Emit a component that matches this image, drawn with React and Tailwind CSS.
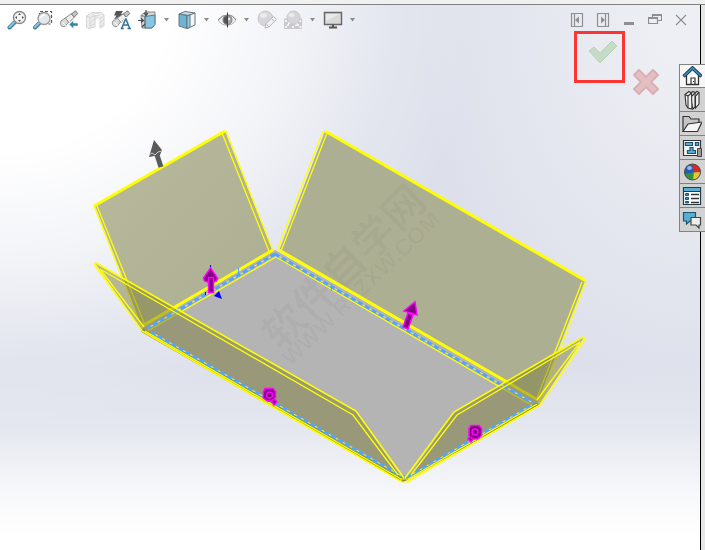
import React, { useState } from "react";

const ZoomFitIcon = () => (
  <svg width="20" height="20" viewBox="0 0 20 20" fill="none">
    <path d="M8 12 2.500 17.500" stroke="#3f7f9f" strokeWidth="4" strokeLinecap="round" />
    <path d="M8 11.500 2.500 17" stroke="#8fc3dc" strokeWidth="2" strokeLinecap="round" />
    <circle cx="12.500" cy="7.500" r="6" fill="#f1f3f4" stroke="#8a8a8a" strokeWidth="1.400" />
    <path d="m12.500 3 1.500 2h-3zM12.500 12l1.500-2h-3zM8 7.500 10 6v3zM17 7.500 15 6v3z" fill="#555" />
  </svg>
);

const ZoomAreaIcon = () => (
  <svg width="20" height="20" viewBox="0 0 20 20" fill="none">
    <path d="M6.500 6V1.500h12V14h-3" stroke="#555" strokeWidth="1.200" strokeDasharray="3 2" />
    <path d="M6 13.500 2 17.500" stroke="#3f7f9f" strokeWidth="4" strokeLinecap="round" />
    <path d="M6 13 2 17" stroke="#8fc3dc" strokeWidth="2" strokeLinecap="round" />
    <circle cx="11" cy="8.500" r="6" fill="#e3e9ec" stroke="#999" strokeWidth="1.300" />
    <path d="M8 8a3.500 3.500 0 0 1 4-3" stroke="#fff" strokeWidth="1.500" />
  </svg>
);

const Telescope = () => (
  <>
    <path d="m2 11 5-3.500 3 4-4 5c-3 1-6-2-4-5.500z" fill="#d9d9d9" stroke="#909090" />
    <path d="m6.500 8 6-4.500 3 3.500-5.500 5.500z" fill="#ececec" stroke="#8a8a8a" />
    <path d="m12.500 4 4-3.200 2.200 2.700-3.500 3.700z" fill="#c4c4c4" stroke="#777" />
    <path d="m3.500 12 3 3.500M8 8.500l3 3.500" stroke="#fff" />
  </>
);

const PreviousViewIcon = () => (
  <svg width="20" height="20" viewBox="0 0 20 20" fill="none">
    <Telescope />
    <path d="m10 14.500 4.500-4.200v2.700H19v3h-4.500v2.700z" fill="#3587ad" stroke="#f8f8f8" strokeWidth=".5" />
  </svg>
);

const SectionIcon = () => (
  <svg width="20" height="20" viewBox="0 0 20 20" fill="none" stroke="#d6d6d6">
    <path d="M1.500 6 7 2.500h9.500L19 5v11l-4 2v-8.500c-1-2-4-2-5 0V17l-6 1.500-2.500-1z" fill="#ededed" />
    <path d="M1.500 6 5 7.500 10 6l3-2.500M5 7.500v11M10 6v4M15 9l4-3.500M5 13l5-4M5 17l5-4M15 13l4-4M15 17l4-4" />
    <ellipse cx="11" cy="4.500" rx="3" ry="1.300" fill="#f9f9f9" />
  </svg>
);

const AnnotationViewIcon = () => (
  <svg width="20" height="20" viewBox="0 0 20 20" fill="none">
    <Telescope />
    <path d="M5 1h7l-2 3h2L3 9.500l2.500-4H3z" fill="#555" />
    <path d="m10.500 18.500 4-10h1.200l4 10M12 15h5.500M9.500 18.500h3M16.500 18.500H20" stroke="#f6f6f6" strokeWidth="3" />
    <path d="m10.800 18 4-9.500M14.800 8.500l3.700 9.500M12 15h5M9.800 18.500h3M16.500 18.500H20" stroke="#35779e" strokeWidth="1.500" />
  </svg>
);

const OrientationIcon = () => (
  <svg width="20" height="20" viewBox="0 0 20 20" fill="none">
    <path d="M4 5.500 8 2h10v11l-3 5H5z" fill="#d9d9d9" stroke="#888" />
    <path d="M8 6.500 18 5v9.500L15 18H8z" fill="#8bc4df" stroke="#4b7f98" />
    <path d="M4 5.500 8 6.500l3-4M8 6.500V18" stroke="#777" />
    <path d="M9 0v5M7 3l2 2.500L11 3M1 10.500h5M4 8.500l2.500 2L4 12.500M5 17l3-3" stroke="#4a4a4a" strokeWidth="1.200" />
  </svg>
);

const DisplayStyleIcon = () => (
  <svg width="20" height="20" viewBox="0 0 20 20" fill="none" stroke="#66747b">
    <path d="m2 4 6-2.500L18 3l-6 2.500z" fill="#c2e4f2" />
    <path d="m2 4 8 1.500v13L2 16z" fill="#6eb4d5" />
    <path d="m10 6 8-3v12l-8 3.500z" fill="#f4f5f6" />
    <path d="m10 6 3-1.200v12.600l-3 1.100z" fill="#92cce4" />
  </svg>
);

const EyeIcon = () => (
  <svg width="20" height="20" viewBox="0 0 20 20" fill="none">
    <path d="M1 10.500Q5 5 10.500 5T19 10.500Q15 15.500 10 15.500T1 10.500z" fill="#f2f2f2" stroke="#b4b4b4" />
    <path d="M1 10Q5 5 10.500 5T19 10" stroke="#8a8a8a" />
    <circle cx="10.500" cy="10" r="4.500" fill="#aaa" stroke="#777" />
    <path d="M10.500 6a4 4 0 0 0 0 8z" fill="#555" />
    <circle cx="12" cy="9" r="1" fill="#fff" />
    <path d="M10.500 2.500v15" stroke="#444" />
  </svg>
);

const AppearanceIcon = () => (
  <svg width="20" height="20" viewBox="0 0 20 20" fill="none">
    <circle cx="8.500" cy="8.500" r="7.500" fill="#d6d6d8" stroke="#c9c9cb" />
    <ellipse cx="6.500" cy="5.500" rx="3.500" ry="2.500" fill="#ebebed" />
    <path d="m8 18 1-4.500 7.500-7 3 3-7.500 7.500z" fill="#f1f1f3" stroke="#b9b9bb" />
    <path d="m9 13.500 3 3.500M14.500 8.500l3 3" stroke="#b9b9bb" />
  </svg>
);

const SceneIcon = () => (
  <svg width="20" height="20" viewBox="0 0 20 20" fill="none">
    <path d="M1 8.500h4v10H1zM15 8.500h4v10h-4zM1 14h18v5H1z" fill="#c9c9cb" />
    <path d="M2 10h2v2H2zM16 10h2v2h-2zM4 14h2v2H4zM9 16h2v2H9zM14 14h2v2h-2zM2 16h2v2H2zM12 14.500h2V16h-2zM16.500 16h2v2h-2z" fill="#f3f3f5" />
    <circle cx="10.500" cy="7.500" r="6.500" fill="#d6d6d8" stroke="#c9c9cb" />
    <ellipse cx="8.500" cy="5" rx="3" ry="2" fill="#ebebed" />
  </svg>
);

const MonitorIcon = () => (
  <svg width="20" height="20" viewBox="0 0 20 20" fill="none">
    <path d="M1.500 2.500h17v12h-17z" fill="#d8d8d8" stroke="#666" strokeWidth="1.400" />
    <path d="M3 4h14L3 11z" fill="#e9e9e9" />
    <path d="M10 15v2.500M6 17.500h8" stroke="#555" strokeWidth="2" />
  </svg>
);

const HomeIcon = () => (
  <svg width="20" height="20" viewBox="0 0 20 20" fill="none">
    <path d="M4.500 9v9.500h12V9" fill="#fff" stroke="#333" strokeWidth="1.300" />
    <path d="M9 18.500V12h4v6.500M11.500 15v1" stroke="#333" strokeWidth="1.200" />
    <path d="m1.500 10.500 9-8.500 9 8.500" stroke="#153f57" strokeWidth="3.500" />
    <path d="m2 10 8.500-8 8.500 8" stroke="#3f94bf" strokeWidth="1.600" />
  </svg>
);

const LibraryIcon = () => (
  <svg width="20" height="20" viewBox="0 0 20 20" fill="#f1f1f1" stroke="#333" strokeWidth="1.100">
    <path d="m11.500 4 3.500-2.500 2 1V14l-3.500 4z" />
    <path d="m7.500 4 3.500-2.500 2 1V17l-2 2z" />
    <path d="m3 4.500 4-3 2.500 1.500L10 19l-4-1-2-3z" />
    <path d="m3 4.500 3 1.500 3.500-3M6 6v12M10 6l3-3M13.500 6 17 2.500M13.500 6v12" fill="none" />
  </svg>
);

const FolderIcon = () => (
  <svg width="20" height="20" viewBox="0 0 20 20" stroke="#333" strokeWidth="1.200">
    <path d="M1 17.500v-15h6l2 2.500h8v4" fill="#c6c6c6" />
    <path d="m1 17.500 5-7.500 14-2-4.500 9.500z" fill="#f5f5f5" />
  </svg>
);

const PaletteIcon = () => (
  <svg width="20" height="20" viewBox="0 0 20 20" fill="none">
    <path d="M1.500 2.500h17v15h-17z" fill="#f5f5f5" stroke="#333" strokeWidth="1.200" />
    <path d="M3.500 4.500h7v3h-7zM13.500 4.500h3v3h-3zM8 9.500h3v3h2.500v3h-8v-3H8z" fill="#58aed2" stroke="#1b5472" strokeWidth="1.200" />
    <path d="M15.500 10.500h4v8h-4z" fill="#999" stroke="#444" />
  </svg>
);

const BallIcon = () => (
  <svg width="20" height="20" viewBox="0 0 20 20">
    <circle cx="10.500" cy="10" r="8" fill="#205fb5" />
    <path d="M9 2.100Q12 6 11.500 10.500L18.500 10A8 8 0 0 0 9 2.100z" fill="#d82b20" />
    <path d="M11.500 10.500 18.500 10A8 8 0 0 1 11 18z" fill="#eac62b" />
    <path d="M2.600 11.500Q7 12 11.500 10.500L11 18a8 8 0 0 1-8.400-6.500z" fill="#319537" />
    <ellipse cx="7.500" cy="6" rx="2.500" ry="2" fill="#c8dcfb" opacity=".7" />
    <circle cx="10.500" cy="10" r="8" fill="none" stroke="#4e4e4e" />
  </svg>
);

const PropertiesIcon = () => (
  <svg width="20" height="20" viewBox="0 0 20 20" fill="none">
    <path d="M1.500 1.500h17v17h-17z" fill="#fff" stroke="#223b49" strokeWidth="1.200" />
    <path d="M2 2h16v3H2z" fill="#58aed2" />
    <path d="M2 5.500h16" stroke="#223b49" />
    <path d="M3.500 7.500h3v2h-3zM3.500 11.500h3v2h-3zM3.500 15.500h3v1.500h-3z" fill="#3f94bf" stroke="#1b5472" />
    <path d="M9 8.500h8M9 12.500h8M9 16.500h8" stroke="#333" strokeWidth="1.300" />
  </svg>
);

const ForumIcon = () => (
  <svg width="20" height="20" viewBox="0 0 20 20">
    <path d="M1.500 2.500h12v8.500H8L4.500 14v-3h-3z" fill="#58aed2" stroke="#1b5472" strokeWidth="1.200" />
    <path d="M9 7.500h9.500v7.500H17v3l-3-3H9z" fill="#eee" stroke="#444" strokeWidth="1.200" />
  </svg>
);

const tools = [
  { name: "Zoom to Fit", icon: <ZoomFitIcon /> },
  { name: "Zoom to Area", icon: <ZoomAreaIcon /> },
  { name: "Previous View", icon: <PreviousViewIcon /> },
  { name: "Section View", icon: <SectionIcon /> },
  { name: "Dynamic Annotation Views", icon: <AnnotationViewIcon /> },
  { name: "View Orientation", icon: <OrientationIcon />, menu: true },
  { name: "Display Style", icon: <DisplayStyleIcon />, menu: true },
  { name: "Hide/Show Items", icon: <EyeIcon />, menu: true },
  { name: "Edit Appearance", icon: <AppearanceIcon /> },
  { name: "Apply Scene", icon: <SceneIcon />, menu: true },
  { name: "View Settings", icon: <MonitorIcon />, menu: true },
];

const windowButtons = [
  { name: "Previous pane", path: "M1.500 .5h11v13h-11zM4.500 .5v13", fill: "M9 3.500v7L5 7z" },
  { name: "Next pane", path: "M1.500 .5h11v13h-11zM9.500 .5v13", fill: "M5 3.500v7L9 7z" },
  { name: "Minimize", fill: "M2 9h10v3H2z" },
  { name: "Restore", path: "M4.500 4V1.500h9v6H10M.5 4.500h9v6h-9zM.5 5.500h9M4.500 2.500h9" },
  { name: "Close", path: "m2 2 10 10M12 2 2 12" },
];

const tabs = [
  { name: "Home", icon: <HomeIcon /> },
  { name: "Design Library", icon: <LibraryIcon /> },
  { name: "File Explorer", icon: <FolderIcon /> },
  { name: "View Palette", icon: <PaletteIcon /> },
  { name: "Appearances", icon: <BallIcon /> },
  { name: "Custom Properties", icon: <PropertiesIcon /> },
  { name: "Forum", icon: <ForumIcon /> },
];

// bend lines where the flanges meet the base
const bends = [
  "M275 254 148 328",
  "M275 254 533 403",
  "M151 332 398 474 404 477 411 475 532 405",
];

const Model = () => (
  <svg
    className="absolute top-0 left-0"
    width="700"
    height="545"
    viewBox="0 5 700 545"
    fill="none"
  >
    <defs>
      <linearGradient id="flange" x1="0" y1="0" x2="1" y2="1">
        <stop offset="0" stopColor="#b9ba9c" />
        <stop offset="1" stopColor="#acae92" />
      </linearGradient>
    </defs>

    {/* base and the two rear flanges */}
    <path d="M275 250 539 401 405 481 142 328z" fill="#b4b4b4" />
    <path d="M95 206 225 131 273 251 142 327z" fill="url(#flange)" />
    <path d="M325 131 585 281 538 401 279 251z" fill="#adaf93" />

    {/* watermark */}
    <g fill="#000000" fillOpacity=".03" fontWeight="700">
      <text
        transform="translate(344 267) rotate(-45)"
        y="15"
        fontSize="42"
        textAnchor="middle"
        fontFamily="'Noto Sans CJK SC', sans-serif"
      >
        软件自学网
      </text>
      <text
        transform="translate(291 367) rotate(-44)"
        fontSize="23"
        fontFamily="'Liberation Sans', sans-serif"
      >
        WWW.RJZXW.COM
      </text>
    </g>

    <g stroke="#ffff00">
      <path d="M94 206 225 131" strokeWidth="3" />
      <path d="M325 131 586 281" strokeWidth="3" />
      <path d="M142 326 273 250M279 250 538 400" strokeWidth="3" />
      <g strokeWidth="1.300">
        <path d="M94 206 141 326M97 206 145 325M222 133 269 251M226 131 273 251" />
        <path d="M323 131 277 251M327 133 281 251M586 281 540 402M582 282 537 398" />
        <path d="M146 332 276 257 533 406" />
      </g>
    </g>

    {/* front flanges are see-through */}
    <path d="M95 263 356 411 404 481 142 331z" fill="#7d7d3c" fillOpacity=".49" />
    <path d="M584 337 454 412 406 481 539 405z" fill="#7d7d3c" fillOpacity=".49" />
    <path d="M142 330 403 480 538 404" stroke="#8b8b3c" strokeWidth="4" />

    {bends.map((d) => (
      <g key={d}>
        <path d={d} stroke="#8fa9b4" strokeWidth="3" strokeDasharray="1 1" />
        <path d={d} stroke="#e8e86a" strokeWidth="1" />
        <path d={d} stroke="#50a5ff" strokeWidth="3" strokeDasharray="5 3" />
      </g>
    ))}
    <path d="M238.500 268v8M331.500 284v7" stroke="#50a5ff" />

    <g stroke="#ffff00">
      <path d="M94 264 142 331 402 482M94 264 96 263 356 411 404 478" strokeWidth="1.600" />
      <path d="M100 269 144 327M100 269 353 415 398 475M145 331 401 479" strokeWidth="1.300" />
      <path d="M407 482 540 405 585 339 583 337 454 412 405 478" strokeWidth="1.600" />
      <path d="M580 342 537 400M580 342 457 415 411 475M537 404 408 479" strokeWidth="1.300" />
      <path d="M401 479h9v3h-9z" />
    </g>

    {/* drag handles */}
    <path d="m156 152 5 15" stroke="#5a5a5a" strokeWidth="5" />
    <path d="m154 140 8 10-2 5-11 2z" fill="#5a5a5a" />
    <path d="m149 155 3-2 3 2 3-3 4-1" stroke="#c8c8c8" />

    <path d="m219 291 3 8-8-3z" fill="#0000ff" />
    <path d="M210.500 265v4M205.500 292v3" stroke="#0000ff" />
    <g fill="#800080" stroke="#ff00ff" strokeWidth="1.500">
      <path d="m210.500 268 7 10-1 3-6 2-6-2-1-3z" />
      <path d="M208.500 277.500h5v15h-5z" />

      <path d="m408 313 5 2-5 14-5-2z" />
      <path d="m415 302 2 13-13-4z" />

      <path d="m269 398 3-2 5 6-3 3z" />
      <path d="M265 388.500h8l2.500 3v6l-4 3.500h-4l-4-3v-6z" />
      <circle cx="269.500" cy="395" r="3" />

      <path d="m472 433 3 3-4 6-3-3z" />
      <path d="M471 425.500h8l2.500 3v7l-4 3.500h-5l-3.500-3v-7.500z" />
      <circle cx="475" cy="432" r="3" />
    </g>
  </svg>
);

const App = () => {
  const [activeTab, setActiveTab] = useState("Home");

  return (
    <div className="relative min-h-screen flex flex-col bg-[#e6e6e6]">
      <header className="h-[5px] bg-[#f0f0f0] border-b border-[#808080]" />

      <div className="flex flex-1 pr-1">
        <main className="relative flex-1 min-h-[545px] overflow-hidden border-r border-black bg-[linear-gradient(to_bottom,transparent_66%,rgba(255,255,255,0.25)_78%,rgba(255,255,255,0.8)_90%,white_98%),radial-gradient(ellipse_480px_420px_at_0px_0px,white_35%,rgba(255,255,255,0.65)_60%,rgba(255,255,255,0.2)_82%,transparent_100%),radial-gradient(ellipse_280px_400px_at_100%_0px,#eeeff4_15%,transparent_100%),linear-gradient(#dde0eb,#dde0eb)]">
          <Model />

          {/* Heads-up toolbar */}
          <div className="relative flex items-center justify-between h-[26px] pt-1 pl-[7px] pr-3">
            <div className="flex items-center gap-1.5">
              {tools.map((tool) => (
                <React.Fragment key={tool.name}>
                  <button aria-label={tool.name} className="w-5 h-5">
                    {tool.icon}
                  </button>
                  {tool.menu && (
                    <button aria-label={`${tool.name} menu`} className="w-2">
                      <svg width="8" height="6" viewBox="0 0 8 6">
                        <path d="M1 1h5L3.500 4.500z" fill="#8b8b8b" />
                      </svg>
                    </button>
                  )}
                </React.Fragment>
              ))}
            </div>
            <div className="flex items-center gap-3">
              {windowButtons.map((item) => (
                <button key={item.name} aria-label={item.name} className="w-3.5 h-3.5">
                  <svg width="14" height="14" viewBox="0 0 14 14" fill="none">
                    {item.path && <path d={item.path} stroke="#8f8f92" strokeWidth="1.200" />}
                    {item.fill && <path d={item.fill} fill="#8f8f92" />}
                  </svg>
                </button>
              ))}
            </div>
          </div>

          {/* Confirmation corner */}
          <div className="relative flex items-start justify-end gap-2 pr-[41px]">
            <button aria-label="OK" className="w-[51px] h-[52px] border-3 border-[#fb3434]">
              <svg width="45" height="46" viewBox="0 0 45 46">
                <path d="m12 17 5-4 6 6L35 7l5 5-17 17z" fill="#c4dcc5" stroke="#b9d3ba" strokeLinejoin="round" />
              </svg>
            </button>
            <button aria-label="Cancel" className="mt-[38px]">
              <svg width="26" height="26" viewBox="0 0 26 26">
                <path
                  d="m6 1 7 7 7-7 5 5-7 7 7 7-5 5-7-7-7 7-5-5 7-7-7-7z"
                  fill="#e3bfc3"
                  stroke="#d9b0b4"
                  strokeWidth="2"
                  strokeLinejoin="round"
                />
              </svg>
            </button>
          </div>
        </main>
      </div>

      {/* Task pane tabs */}
      <nav className="absolute top-16 right-0 w-[26px] flex flex-col gap-px py-px pl-px bg-[#828282]">
        {tabs.map((tab) => (
          <button
            key={tab.name}
            aria-label={tab.name}
            onClick={() => setActiveTab(tab.name)}
            className={`flex items-center h-[23px] first:h-[22px] pl-0.5 ${
              activeTab === tab.name ? "bg-[#f7f7f7]" : "bg-[#d2d2d2]"
            }`}
          >
            {tab.icon}
          </button>
        ))}
      </nav>
    </div>
  );
};

export default App;
